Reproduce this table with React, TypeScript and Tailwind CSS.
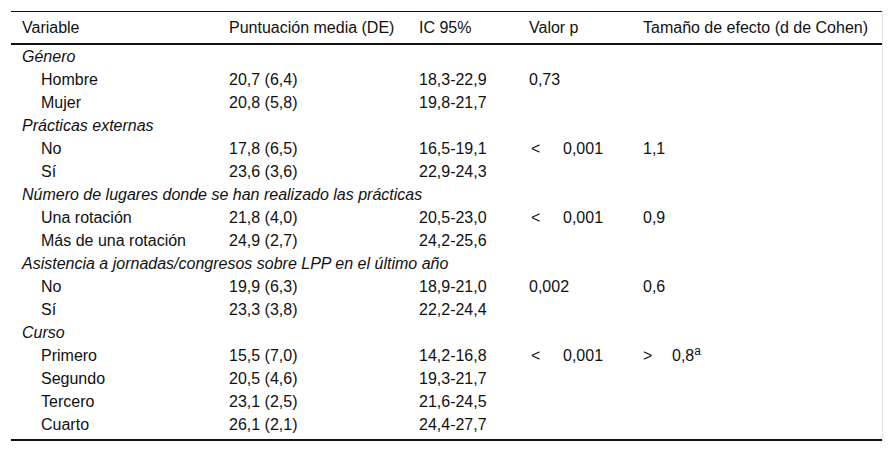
import React from "react";

type Row =
  | { group: string }
  | { label: string; mean: string; ci: string; p?: React.ReactNode; d?: React.ReactNode };

const lt = (v: string) => (
  <>
    <span className="inline-block w-[34px] pl-[2px]">&lt;</span>
    {v}
  </>
);

const rows: Row[] = [
  { group: "Género" },
  { label: "Hombre", mean: "20,7 (6,4)", ci: "18,3-22,9", p: "0,73" },
  { label: "Mujer", mean: "20,8 (5,8)", ci: "19,8-21,7" },
  { group: "Prácticas externas" },
  { label: "No", mean: "17,8 (6,5)", ci: "16,5-19,1", p: lt("0,001"), d: "1,1" },
  { label: "Sí", mean: "23,6 (3,6)", ci: "22,9-24,3" },
  { group: "Número de lugares donde se han realizado las prácticas" },
  { label: "Una rotación", mean: "21,8 (4,0)", ci: "20,5-23,0", p: lt("0,001"), d: "0,9" },
  { label: "Más de una rotación", mean: "24,9 (2,7)", ci: "24,2-25,6" },
  { group: "Asistencia a jornadas/congresos sobre LPP en el último año" },
  { label: "No", mean: "19,9 (6,3)", ci: "18,9-21,0", p: "0,002", d: "0,6" },
  { label: "Sí", mean: "23,3 (3,8)", ci: "22,2-24,4" },
  { group: "Curso" },
  {
    label: "Primero",
    mean: "15,5 (7,0)",
    ci: "14,2-16,8",
    p: lt("0,001"),
    d: (
      <>
        <span className="inline-block w-[29px]">&gt;</span>
        0,8<sup>a</sup>
      </>
    ),
  },
  { label: "Segundo", mean: "20,5 (4,6)", ci: "19,3-21,7" },
  { label: "Tercero", mean: "23,1 (2,5)", ci: "21,6-24,5" },
  { label: "Cuarto", mean: "26,1 (2,1)", ci: "24,4-27,7" },
];

export default function App() {
  return (
    <div className="min-h-screen bg-white pt-[11px] pl-[11px] font-['Liberation_Sans',Arial,sans-serif] text-[16px] leading-[19px] text-[#111]">
      <div className="w-[872px] border-r border-[#e6e6e6]">
        <table className="w-[871px] table-fixed border-collapse border-t border-b-2 border-[#111]">
          <colgroup>
            <col className="w-[207px]" />
            <col className="w-[190px]" />
            <col className="w-[110px]" />
            <col className="w-[114px]" />
            <col className="w-[250px]" />
          </colgroup>
          <thead>
            <tr className="border-b-2 border-[#111] text-left">
              <th className="font-normal px-[11px] py-[6px]">Variable</th>
              <th className="font-normal px-[11px] py-[6px]">Puntuación media (DE)</th>
              <th className="font-normal px-[11px] py-[6px]">IC 95%</th>
              <th className="font-normal px-[11px] py-[6px]">Valor p</th>
              <th className="font-normal px-[11px] py-[6px] whitespace-nowrap">Tamaño de efecto (d de Cohen)</th>
            </tr>
          </thead>
          <tbody>
            {rows.map((r, i) => {
              const last = i === rows.length - 1;
              const py = last ? "pt-[2px] pb-[5px]" : "py-[2px]";
              return "group" in r ? (
                <tr key={i}>
                  <td colSpan={5} className={`italic px-[11px] whitespace-nowrap ${py}`}>
                    {r.group}
                  </td>
                </tr>
              ) : (
                <tr key={i}>
                  <td className={`pl-[30px] pr-[4px] whitespace-nowrap ${py}`}>{r.label}</td>
                  <td className={`px-[11px] ${py}`}>{r.mean}</td>
                  <td className={`px-[11px] ${py}`}>{r.ci}</td>
                  <td className={`px-[11px] whitespace-nowrap ${py}`}>{r.p}</td>
                  <td className={`px-[11px] whitespace-nowrap ${py}`}>{r.d}</td>
                </tr>
              );
            })}
          </tbody>
        </table>
      </div>
    </div>
  );
}
